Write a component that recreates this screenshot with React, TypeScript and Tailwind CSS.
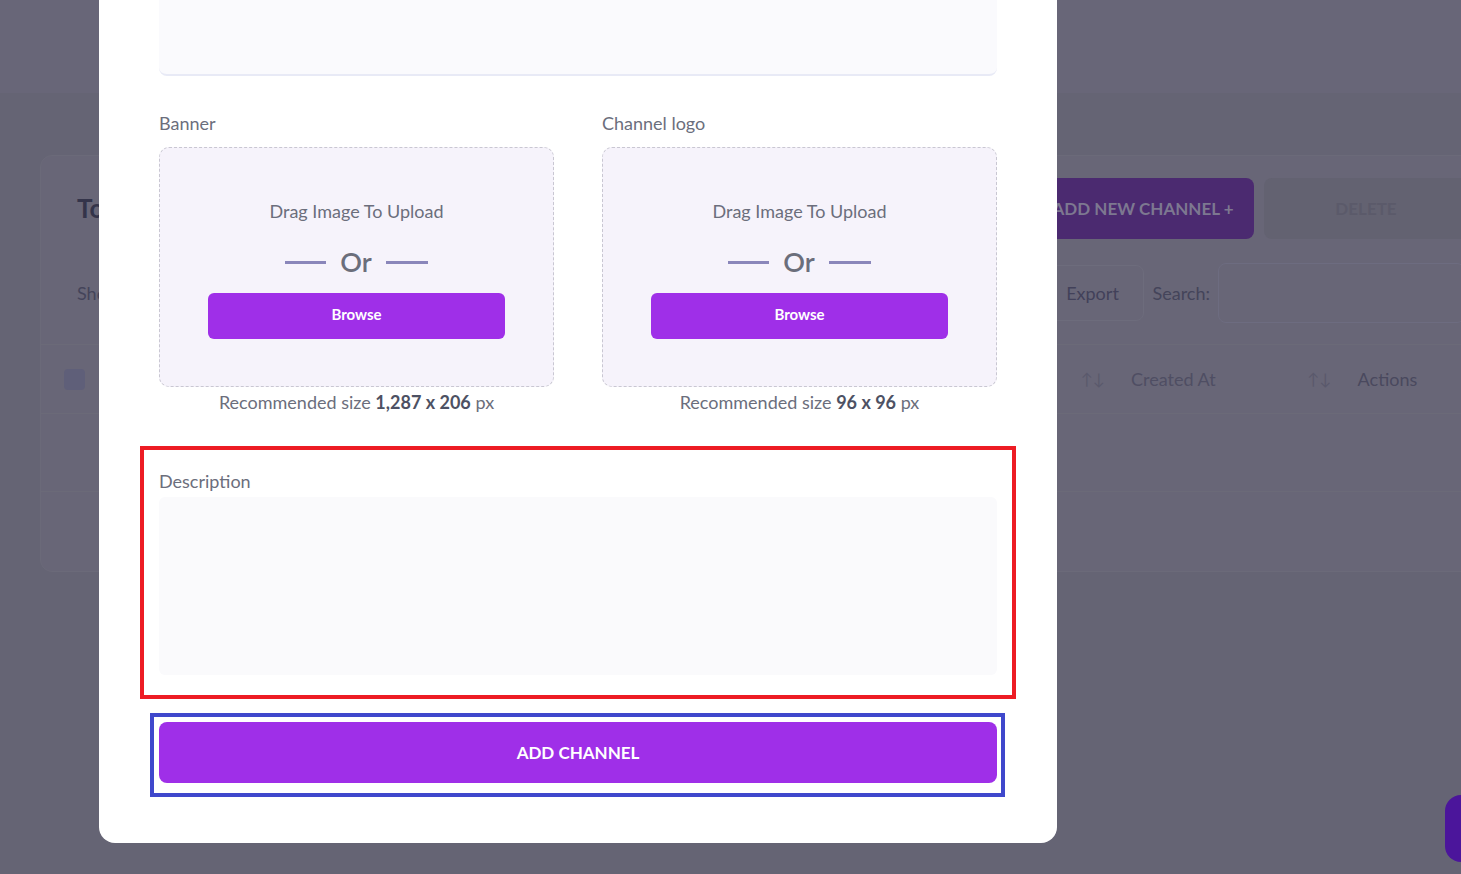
import type React from "react"

const font = { fontFamily: "Lato, 'Open Sans', sans-serif" }

function UploadBox({ label, size }: { label: string; size: React.ReactNode }) {
  return (
    <div className="flex flex-col">
      <label className="text-[18px] leading-[22px] text-[#6b6e7c]">{label}</label>
      <div className="mt-[13px] flex h-[240px] flex-col items-center rounded-[10px] border border-dashed border-[#c9c7d2] bg-[#f6f3fb] pt-[52px]">
        <p className="text-[18px] leading-[22px] text-[#6b6e7c]">Drag Image To Upload</p>
        <div className="mt-[24px] flex items-center gap-[14px]">
          <span className="h-[3px] w-[41px] bg-[#8a86ba]"></span>
          <span className="text-[27px] font-semibold leading-8 text-[#6b6e7b]">Or</span>
          <span className="h-[3px] w-[42px] bg-[#8a86ba]"></span>
        </div>
        <button className="mt-[15px] h-[46px] w-[297px] rounded-md bg-[#9f2fe8] pb-[3px] text-[15px] font-bold text-white">
          Browse
        </button>
      </div>
      <p className="mt-[4px] text-center text-[18px] leading-[22px] text-[#6b6e7c]">{size}</p>
    </div>
  )
}

function ChannelModal() {
  return (
    <div className="absolute left-[99px] top-[-40px] w-[958px] rounded-2xl bg-white px-[60px] pb-[60px]">
      <div className="h-[116px] rounded-lg border-b-2 border-[#e8eaf6] bg-[#fafafd]"></div>

      <div className="mt-[36px] grid grid-cols-2 gap-[48px]">
        <UploadBox
          label="Banner"
          size={
            <>
              Recommended size <b className="font-bold text-[#4d5163]">1,287 x 206</b> px
            </>
          }
        />
        <UploadBox
          label="Channel logo"
          size={
            <>
              Recommended size <b className="font-bold text-[#4d5163]">96 x 96</b> px
            </>
          }
        />
      </div>

      <div className="relative mt-[57px]">
        <div className="pointer-events-none absolute -left-[19px] -right-[19px] -top-[24px] -bottom-[24px] border-4 border-[#ed1c24]"></div>
        <label className="block text-[18px] leading-[22px] text-[#6b6e7c]">Description</label>
        <div className="mt-[5px] h-[178px] rounded-md bg-[#fafafc]"></div>
      </div>

      <div className="relative mt-[47px]">
        <div className="pointer-events-none absolute -left-[9px] -right-[8px] -top-[9px] -bottom-[14px] border-4 border-[#3f48cc]"></div>
        <button className="h-[61px] w-full rounded-lg bg-[#9f2fe8] text-[17px] font-bold uppercase text-white">
          Add Channel
        </button>
      </div>
    </div>
  )
}

function Dashboard() {
  return (
    <div className="flex h-full">
      <div className="flex w-[2px] flex-col">
        <div className="h-[570px] bg-[#4f2d85]"></div>
        <div className="flex-1 bg-[#5d5c6b]"></div>
      </div>
      <div className="flex-1">
        <div className="h-[93px] bg-[#686678]"></div>
        <div className="ml-[40px] mt-[62px] h-[417px] w-[1461px] rounded-xl border border-[#6b6a79] bg-[#686677]">
          <div className="flex items-center justify-between pl-[36px] pr-[32px] pt-[22px]">
            <h2 className="text-[26px] font-bold text-[#34344a]">Total Channels</h2>
            <div className="flex gap-[10px]">
              <button className="h-[61px] w-[222px] rounded-lg bg-[#4b2a70] text-[17px] font-bold text-[#7d7890]">
                ADD NEW CHANNEL +
              </button>
              <button className="h-[61px] w-[204px] rounded-lg bg-[#636271] text-[17px] font-bold text-[#5b5a6a]">
                DELETE
              </button>
            </div>
          </div>
          <div className="mt-[24px] flex items-center justify-between pl-[36px] pr-[35px]">
            <span className="text-[18px] text-[#44445a]">Show 10 entries</span>
            <div className="flex items-center">
              <button className="h-[56px] w-[102px] rounded-lg border border-[#6d6c7c] text-[18px] text-[#42415a]">
                Export
              </button>
              <span className="ml-[9px] text-[18px] text-[#44445a]">Search:</span>
              <div className="ml-[8px] h-[60px] w-[247px] rounded-lg border border-[#6d6c80]"></div>
            </div>
          </div>
          <div className="mt-[21px] flex h-[70px] items-center border-y border-[#6b6a78] pl-[23px]">
            <span className="h-[21px] w-[21px] rounded bg-[#5f5f79]"></span>
            <span className="ml-[996px] text-[16px] text-[#5a596c]">↑↓</span>
            <span className="ml-[26px] text-[18px] text-[#4f4e63]">Created At</span>
            <span className="ml-[92px] text-[16px] text-[#5a596c]">↑↓</span>
            <span className="ml-[26px] text-[18px] text-[#4a495e]">Actions</span>
          </div>
          <div className="h-[78px] border-b border-[#6b6a78]"></div>
        </div>
      </div>
    </div>
  )
}

export default function App() {
  return (
    <div className="relative h-[874px] w-[1461px] overflow-hidden bg-[#656474]" style={font}>
      <Dashboard />
      <div className="absolute right-[-20px] top-[795px] h-[67px] w-[36px] rounded-2xl bg-[#4b159b]"></div>
      <ChannelModal />
    </div>
  )
}
